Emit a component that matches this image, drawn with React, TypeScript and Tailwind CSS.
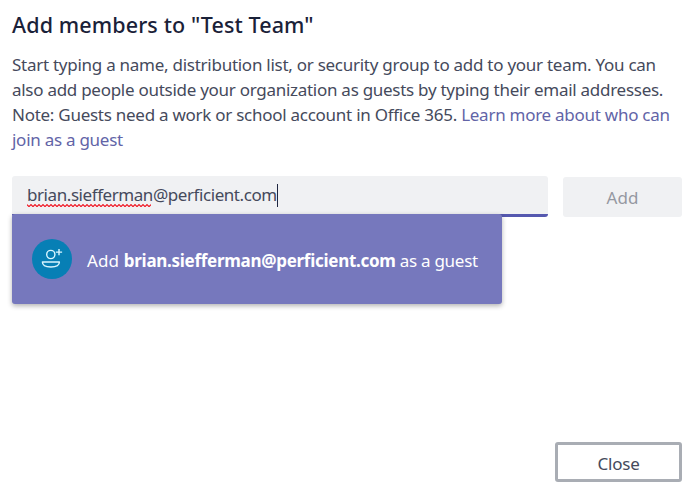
const SQUIGGLE_WIDTH = 124;

function GuestIcon() {
  return (
    <svg viewBox="0 0 40 40" className="size-10" fill="none" stroke="#d9f6ff" strokeWidth="1.4">
      <circle cx="18.8" cy="15.5" r="4.1" />
      <path d="M27 10v6.2M23.9 13.1h6.2" />
      <path d="M10.4 23h17c0 3.1-3.4 5-8.5 5s-8.5-1.9-8.5-5z" strokeLinejoin="round" />
    </svg>
  );
}

function Squiggle() {
  const points = Array.from({ length: SQUIGGLE_WIDTH / 2 + 1 }, (_, i) => `${i * 2},${i % 2 ? 2.6 : 0.6}`);
  return (
    <svg
      className="absolute left-0 top-[21px]"
      width={SQUIGGLE_WIDTH}
      height="3"
      fill="none"
      stroke="#f01420"
      strokeWidth="1.2"
    >
      <polyline points={points.join(" ")} />
    </svg>
  );
}

export default function App() {
  return (
    <div className="flex h-[491px] w-[691px] flex-col overflow-hidden bg-white pt-3 pr-[9px] pl-3 font-['Noto_Sans','Open_Sans',sans-serif] text-[17px] text-[#454a5c]">
      <h1 className="h-7 text-[21.5px] leading-[26px] font-medium tracking-[0.12px] whitespace-nowrap text-[#1a2138]">
        Add members to "Test Team"
      </h1>

      <p className="mt-3 leading-[25px] whitespace-nowrap">
        <span className="block tracking-[-0.265px]">
          Start typing a name, distribution list, or security group to add to your team. You can
        </span>
        <span className="block tracking-[-0.275px]">
          also add people outside your organization as guests by typing their email addresses.
        </span>
        <span className="block tracking-[-0.265px]">
          Note: Guests need a work or school account in Office 365.{" "}
          <a className="text-[#6264a7]">Learn more about who can</a>
        </span>
        <a className="block tracking-[-0.265px] text-[#6264a7]">join as a guest</a>
      </p>

      {/* Search field + suggestion */}
      <div className="mt-6 flex gap-[15px]">
        <div className="relative h-[41px] w-[536px] rounded-[3px] border-b-[3px] border-[#5558af] bg-[#f0f1f3] pl-[15px]">
          <div className="relative flex h-[38px] items-center whitespace-nowrap">
            <span className="tracking-[-0.43px]">brian.siefferman@perficient.com</span>
            <span className="h-[23px] w-px bg-[#1f2640]" />
            <div className="absolute top-[7px] left-0">
              <Squiggle />
            </div>
          </div>

          <div className="absolute top-[38px] left-0 flex h-[90px] w-[490px] items-center rounded-[3px] bg-[#7678bd] pl-5 whitespace-nowrap text-white shadow-[0_2px_5px_rgba(0,0,0,0.3)]">
            <span className="size-10 rounded-full bg-[#077fb5]">
              <GuestIcon />
            </span>
            <span className="ml-[15px] pt-[3px] tracking-[-0.28px]">
              <span className="tracking-[0.15px]">Add </span>
              <b className="font-bold">brian.siefferman@perficient.com</b> as a guest
            </span>
          </div>
        </div>
        <button className="mt-px h-10 w-[119px] rounded-[3px] bg-[#f0f1f3] pt-px text-[#9598a1]">Add</button>
      </div>

      <button className="mt-[225px] h-10 w-[127px] shrink-0 self-end rounded-[3px] border-[3px] border-[#a9adb4] pt-0.5 leading-none tracking-[-0.2px]">
        Close
      </button>
    </div>
  );
}
